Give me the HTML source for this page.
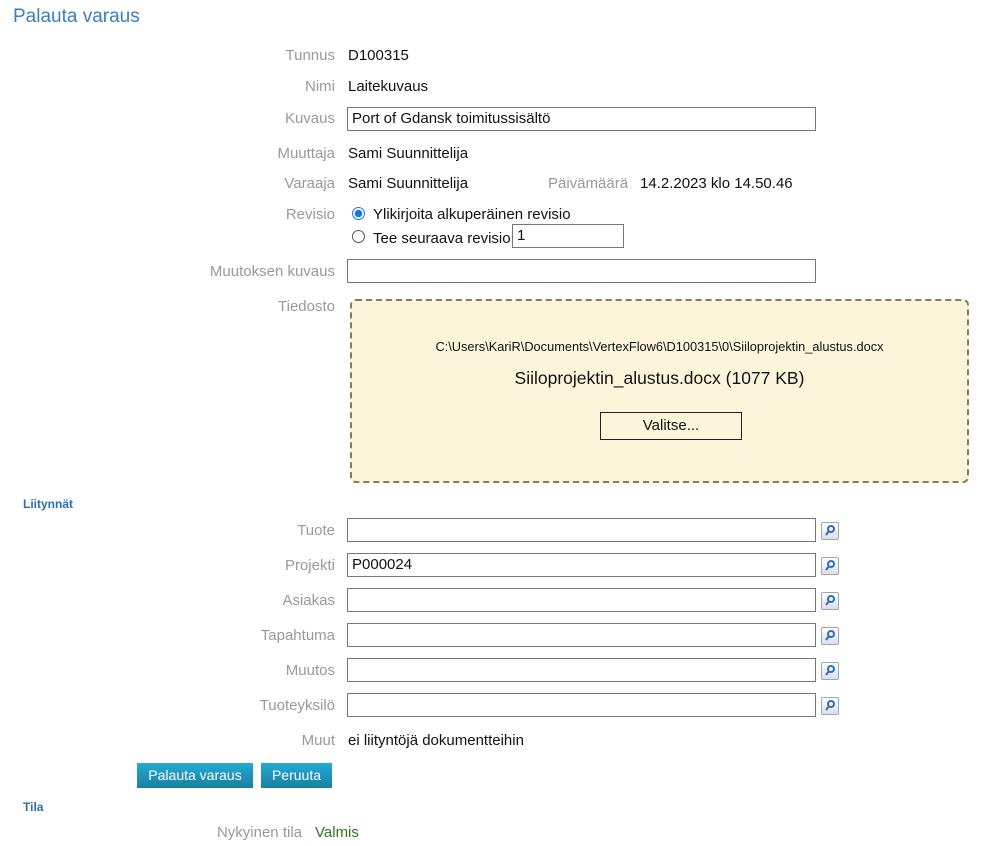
<!DOCTYPE html><html><head><meta charset="utf-8"><style>
body{margin:0;width:984px;height:846px;background:#fff;font-family:"Liberation Sans",sans-serif;font-size:15px;color:#111;position:relative;overflow:hidden}
.a{position:absolute;white-space:nowrap}
.l{position:absolute;right:649px;color:#999;text-align:right;white-space:nowrap}
.v{position:absolute;left:348px;white-space:nowrap}
.in{position:absolute;left:347px;width:467px;height:22px;border:1px solid #777;background:#fff;box-sizing:content-box}
.in span{position:absolute;left:4px;top:2px}
.ic{position:absolute;left:821px;width:16px;height:16px;border:1px solid #9aa;border-radius:2px;background:linear-gradient(#fff,#dde)}
.h{position:absolute;left:23px;color:#2a6fad;font-weight:bold;font-size:12px}
.btn{position:absolute;top:763px;height:25px;background:linear-gradient(#22acd4,#1a7fa0);color:#fff;line-height:25px;text-align:center;font-size:14px}
</style></head><body>
<div class="a" style="left:13px;top:6px;font-size:19px;color:#3a7fbf">Palauta varaus</div>
<div class="l" style="top:47px">Tunnus</div><div class="v" style="top:47px">D100315</div>
<div class="l" style="top:78px">Nimi</div><div class="v" style="top:78px">Laitekuvaus</div>
<div class="l" style="top:110px">Kuvaus</div><div class="in" style="top:107px"><span>Port of Gdansk toimitussisältö</span></div>
<div class="l" style="top:145px">Muuttaja</div><div class="v" style="top:145px">Sami Suunnittelija</div>
<div class="l" style="top:175px">Varaaja</div><div class="v" style="top:175px">Sami Suunnittelija</div>
<div class="a" style="left:548px;top:175px;color:#999">Päivämäärä</div><div class="a" style="left:640px;top:175px">14.2.2023 klo 14.50.46</div>
<div class="l" style="top:206px">Revisio</div>
<div class="a" style="left:352px;top:207px;width:11px;height:11px;border-radius:50%;border:1px solid #1a73e8;background:radial-gradient(#1a73e8 45%,#fff 50%)"></div>
<div class="a" style="left:373px;top:206px">Ylikirjoita alkuperäinen revisio</div>
<div class="a" style="left:352px;top:230px;width:11px;height:11px;border-radius:50%;border:1px solid #555"></div>
<div class="a" style="left:373px;top:230px">Tee seuraava revisio</div>
<div class="a" style="left:512px;top:224px;width:110px;height:22px;border:1px solid #777"><span style="position:absolute;left:4px;top:2px">1</span></div>
<div class="l" style="top:263px">Muutoksen kuvaus</div><div class="in" style="top:259px"></div>
<div class="l" style="top:298px">Tiedosto</div>
<div class="a" style="left:350px;top:299px;width:615px;height:180px;background:#fdf5d9;border:2px dashed #8a7a5a;border-radius:6px"></div>
<div class="a" style="left:350px;top:339px;width:619px;text-align:center;font-size:12.8px">C:\Users\KariR\Documents\VertexFlow6\D100315\0\Siiloprojektin_alustus.docx</div>
<div class="a" style="left:350px;top:368px;width:619px;text-align:center;font-size:17.5px">Siiloprojektin_alustus.docx (1077 KB)</div>
<div class="a" style="left:600px;top:412px;width:140px;height:26px;border:1px solid #222;text-align:center;line-height:26px">Valitse...</div>
<div class="h" style="top:497px">Liitynnät</div>
<div class="l" style="top:522px">Tuote</div><div class="in" style="top:518px"></div><div class="ic" style="top:522px"></div>
<div class="l" style="top:557px">Projekti</div><div class="in" style="top:553px"><span>P000024</span></div><div class="ic" style="top:557px"></div>
<div class="l" style="top:592px">Asiakas</div><div class="in" style="top:588px"></div><div class="ic" style="top:592px"></div>
<div class="l" style="top:627px">Tapahtuma</div><div class="in" style="top:623px"></div><div class="ic" style="top:627px"></div>
<div class="l" style="top:662px">Muutos</div><div class="in" style="top:658px"></div><div class="ic" style="top:662px"></div>
<div class="l" style="top:697px">Tuoteyksilö</div><div class="in" style="top:693px"></div><div class="ic" style="top:697px"></div>
<div class="l" style="top:732px">Muut</div><div class="v" style="top:732px">ei liityntöjä dokumentteihin</div>
<div class="btn" style="left:137px;width:116px">Palauta varaus</div>
<div class="btn" style="left:261px;width:71px">Peruuta</div>
<div class="h" style="top:800px">Tila</div>
<div class="a" style="right:682px;top:824px;color:#999">Nykyinen tila</div>
<div class="a" style="left:315px;top:824px;color:#2a7a1a">Valmis</div>
<svg style="position:absolute;left:0;top:0" width="984" height="846">
<g fill="none" stroke="#2a6fc0" stroke-width="2"><circle cx="831" cy="529" r="3"/><line x1="829" y1="531" x2="826" y2="535"/><circle cx="831" cy="564" r="3"/><line x1="829" y1="566" x2="826" y2="570"/><circle cx="831" cy="599" r="3"/><line x1="829" y1="601" x2="826" y2="605"/><circle cx="831" cy="634" r="3"/><line x1="829" y1="636" x2="826" y2="640"/><circle cx="831" cy="669" r="3"/><line x1="829" y1="671" x2="826" y2="675"/><circle cx="831" cy="704" r="3"/><line x1="829" y1="706" x2="826" y2="710"/></g></svg>
</body></html>
